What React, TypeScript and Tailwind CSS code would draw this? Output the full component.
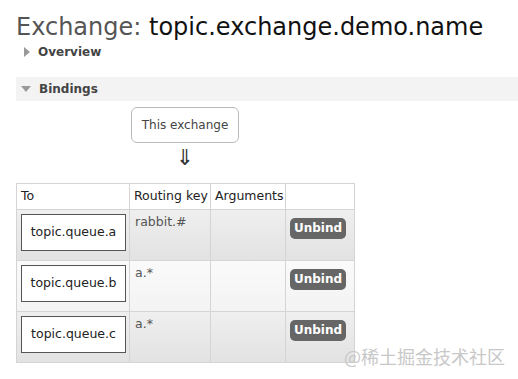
import { memo } from "react";

type Binding = {
    queue: string;
    routingKey: string;
}

const bindings: Binding[] = [
    { queue: "topic.queue.a", routingKey: "rabbit.#" },
    { queue: "topic.queue.b", routingKey: "a.*" },
    { queue: "topic.queue.c", routingKey: "a.*" },
];

function BindingRow({ binding, alt }: { binding: Binding; alt: boolean }) {
    const bg = alt
        ? "bg-gradient-to-b from-[#fafafa] to-[#f3f3f3]"
        : "bg-gradient-to-b from-[#efefef] to-[#e2e2e2]";

    return (
        <tr className={`h-[51px] ${bg}`}>
            <td className="border border-[#d4d4d4] px-[4px] py-[4px] align-top">
                <div className="w-[105px] h-[37px] border border-[#555] bg-white flex items-center justify-center text-[12.5px] text-[#222]">
                    {binding.queue}
                </div>
            </td>
            <td className="border border-[#d4d4d4] px-[5px] pt-[3px] align-top text-[12.5px] text-[#555]">
                {binding.routingKey}
            </td>
            <td className="border border-[#d4d4d4]" />
            <td className="border border-[#d4d4d4] px-[4px] pt-[5px] align-top">
                <span className="inline-flex items-center justify-center w-[56px] h-[21px] rounded-[5px] bg-[#666] text-white font-semibold text-[12px]">
                    Unbind
                </span>
            </td>
        </tr>
    )
}

function App() {
    return (
        <div className="w-[518px] h-[379px] bg-white relative overflow-hidden font-['DejaVu_Sans',Verdana,sans-serif]">
            <div className="px-4 pt-[13px]">
                <h1 className="text-[24px] leading-[28px] text-[#555] whitespace-nowrap">
                    Exchange: <span className="text-[#111]">topic.exchange.demo.name</span>
                </h1>

                <div className="flex items-center h-[22px] pl-[8px] gap-[8px]">
                    <span className="w-0 h-0 border-y-[5px] border-y-transparent border-l-[6px] border-l-[#999]" />
                    <span className="text-[12px] font-bold text-[#444]">Overview</span>
                </div>

                <div className="mt-[14px] flex items-center h-[24px] pl-[5px] gap-[8px] bg-[#f3f3f3] -mr-4">
                    <span className="w-0 h-0 border-x-[5px] border-x-transparent border-t-[6px] border-t-[#999]" />
                    <span className="text-[12px] font-bold text-[#444]">Bindings</span>
                </div>

                <div className="w-[338px] flex flex-col items-center">
                    <div className="mt-[6px] w-[108px] h-[36px] border border-[#bbb] rounded-[6px] flex items-center justify-center text-[12px] text-[#444]">
                        This exchange
                    </div>
                    <div className="mt-[4px] h-[22px] text-[22px] leading-[22px] text-[#333]">⇓</div>
                </div>

                <table className="mt-[14px] w-[338px] border-collapse table-fixed">
                    <colgroup>
                        <col className="w-[113px]" />
                        <col className="w-[81px]" />
                        <col className="w-[75px]" />
                        <col className="w-[69px]" />
                    </colgroup>
                    <thead>
                        <tr className="h-[26px] bg-white text-left text-[12.5px] text-[#222]">
                            <th className="border border-[#d4d4d4] px-[4px] font-normal">To</th>
                            <th className="border border-[#d4d4d4] px-[4px] font-normal whitespace-nowrap">Routing key</th>
                            <th className="border border-[#d4d4d4] px-[4px] font-normal">Arguments</th>
                            <th className="border border-[#d4d4d4]" />
                        </tr>
                    </thead>
                    <tbody>
                        {bindings.map((b, i) => (
                            <BindingRow key={b.queue} binding={b} alt={i === 1} />
                        ))}
                    </tbody>
                </table>
            </div>

            <div className="absolute left-[344px] top-[344px] text-[18px] leading-[24px] text-[#c8c8c8] whitespace-nowrap font-['Noto_Sans_CJK_SC',sans-serif]">
                @稀土掘金技术社区
            </div>
        </div>
    )
}

export default memo(App);
